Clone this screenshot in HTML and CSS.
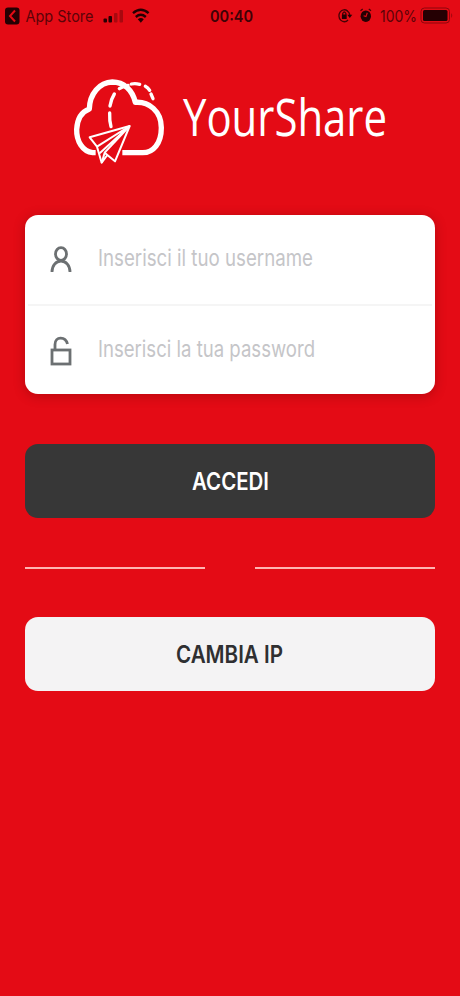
FILE: index.html
```html
<!DOCTYPE html>
<html lang="it">
<head>
<meta charset="utf-8">
<meta name="viewport" content="width=device-width">
<title>YourShare</title>
<link rel="stylesheet" href="styles.css">
</head>
<body>
<header class="status">
  <svg class="status-bar" viewBox="0 0 460 32" width="460" height="32">
    <rect x="5" y="7.500" width="14.500" height="17" rx="3"/>
    <path class="chevron" d="M15 10.500 10 16l5 5.500"/>
    <text class="thin" x="25.500" y="22" textLength="68" lengthAdjust="spacingAndGlyphs">App Store</text>
    <rect x="103.500" y="18.500" width="3.500" height="4" rx="1"/>
    <rect x="108.500" y="16" width="3.500" height="6.500" rx="1"/>
    <rect class="faint" x="114" y="13" width="3.500" height="9.500" rx="1"/>
    <rect class="faint" x="119.500" y="10" width="3.500" height="12.500" rx="1"/>
    <g class="wifi">
      <path d="M133 13.200q7.800-6.800 15.600 0"/>
      <path d="M135.800 17q5-4.300 10 0"/>
    </g>
    <path d="M137.800 19.300q3-2.600 6 0l-3 3.500z"/>
    <text class="bold" x="210" y="22" textLength="43" lengthAdjust="spacingAndGlyphs">00:40</text>
    <g class="lock-ring">
      <path d="M347.500 11a5.300 6 0 1 0 .5 9"/>
      <path d="M346.800 10.500q3 2 3 5"/>
      <path d="M342.700 15v-1.500q1.600-3 3.200 0V15"/>
    </g>
    <path d="M347.300 14.800h5l-2.500 3.200z"/>
    <rect x="341.900" y="14.500" width="4.800" height="4.500" rx=".6"/>
    <ellipse cx="365.800" cy="16.200" rx="5.200" ry="5.800"/>
    <path class="alarm-ears" d="M360.500 10.800l2.200-1.700M371 10.800l-2.200-1.700"/>
    <path class="alarm-hand" d="M367.300 12.800l-1.300 3.700-2.400-.8"/>
    <text class="thin" x="380" y="22" textLength="37" lengthAdjust="spacingAndGlyphs">100%</text>
    <rect class="battery" x="421" y="8" width="28.500" height="15" rx="3.500"/>
    <rect x="423" y="10" width="24.500" height="11" rx="1.500"/>
    <path class="faint" d="M451 13q2.500 2.500 0 5z"/>
  </svg>
</header>
<main class="login">
  <h1 class="brand">
    <svg class="logo" viewBox="0 0 360 330" width="120" height="110">
      <path class="cloud" d="M107 260H98C68 257 49 225 50 190C52 157 66 137 88 129C89 84 118 49 157 48C192 48 217 72 226 109C266 106 304 135 304 185C304 232 280 260 248 260H187"/>
      <path class="trail" d="M153 182Q148 164 149 141M150 120Q153 100 163 84M178 68Q188 61 204 58M214 54Q226 51 239 55M256 61Q264 65 269 73M273 84L279 98"/>
      <g class="plane">
        <path d="M209 180L89 214L111 242L125 290L142 267L165 286Z"/>
        <path d="M209 180L111 242M209 180L119 262M209 180L134 260L125 290M134 260L142 267"/>
      </g>
    </svg>
    <svg class="wordmark" viewBox="0 0 220 84" width="220" height="84">
      <text x="3" y="60" textLength="204" lengthAdjust="spacingAndGlyphs">YourShare</text>
    </svg>
  </h1>
  <section class="card">
    <div class="field">
      <svg class="icon" viewBox="0 0 24 32" width="24" height="32">
        <ellipse cx="12" cy="10" rx="5.500" ry="6.300"/>
        <path d="M3 28c0-6.500 4-11 9-11s9 4.500 9 11"/>
      </svg>
      <svg class="hint" viewBox="0 0 280 48" width="280" height="48">
        <text x="1" y="32" textLength="215" lengthAdjust="spacingAndGlyphs">Inserisci il tuo username</text>
      </svg>
    </div>
    <hr class="rule">
    <div class="field">
      <svg class="icon" viewBox="0 0 24 32" width="24" height="32">
        <rect x="3" y="16" width="18" height="14"/>
        <path d="M6 16V10.500C6 2 16.500 2 18.500 10"/>
      </svg>
      <svg class="hint" viewBox="0 0 280 48" width="280" height="48">
        <text x="1" y="32" textLength="217" lengthAdjust="spacingAndGlyphs">Inserisci la tua password</text>
      </svg>
    </div>
  </section>
  <button class="button dark">
    <svg viewBox="0 0 200 48" width="200" height="48">
      <text x="62" y="32.500" textLength="77" lengthAdjust="spacingAndGlyphs">ACCEDI</text>
    </svg>
  </button>
  <div class="divider"><span></span><span></span></div>
  <button class="button light">
    <svg viewBox="0 0 200 48" width="200" height="48">
      <text x="46" y="32.500" textLength="107" lengthAdjust="spacingAndGlyphs">CAMBIA IP</text>
    </svg>
  </button>
</main>
</body>
</html>
```
FILE: styles.css
```css
* { box-sizing: border-box; }
body {
  margin: 0;
  min-height: 996px;
  background: #e40b15;
  font-family: Inter, "Liberation Sans", sans-serif;
}
svg { display: block; overflow: visible; }
.status { height: 32px; }
.status-bar { fill: #250003; font-size: 16px; }
.thin { fill: #5c0308; }
.bold { font-weight: 600; fill: #400206; }
.faint { fill: #a9080f; }
.chevron { fill: none; stroke: #e40b15; stroke-width: 2; }
.wifi { fill: none; stroke: #250003; stroke-width: 2.4; }
.lock-ring, .alarm-ears { fill: none; stroke: #450205; stroke-width: 1.3; }
.alarm-hand { fill: none; stroke: #e40b15; stroke-width: 1.1; }
.battery { fill: none; stroke: #8d070d; stroke-width: 1; }

.login { padding: 34px 25px 0; }
.brand {
  display: flex;
  align-items: flex-start;
  height: 110px;
  margin: 0 0 39px 35px;
  font-weight: 400;
}
.logo { fill: none; stroke: #fff; stroke-linejoin: round; }
.cloud { stroke-width: 16; }
.trail { stroke-width: 10; stroke-linecap: round; }
.plane { stroke-width: 6; }
.plane path:first-child { fill: #e40b15; }
.wordmark {
  margin-top: 10px;
  font-family: "Open Sans", "Noto Sans", sans-serif;
  font-size: 51.5px;
  fill: #fff;
}
.card {
  height: 179px;
  border-radius: 13px;
  background: #fff;
  box-shadow: 0 2px 12px rgba(90, 0, 0, .32);
}
.field {
  display: flex;
  align-items: center;
  gap: 24px;
  height: 89px;
  padding: 0 24px;
}
.rule { height: 2px; margin: 0 3px; border: 0; background: #f5f5f5; }
.rule + .field { height: 88px; }
.icon { flex: none; fill: none; stroke: #6c7072; stroke-width: 2.8; }
.hint { flex: none; margin-top: -3px; font-size: 22.5px; fill: #c5c5c8; }
.button {
  display: flex;
  align-items: center;
  justify-content: center;
  width: 100%;
  height: 74px;
  margin: 0;
  padding: 0;
  border: 0;
  border-radius: 13px;
  font: 600 24px Inter, "Liberation Sans", sans-serif;
}
.dark { margin-top: 50px; background: #373737; fill: #fff; }
.light { background: #f4f3f4; fill: #2f2f31; }
.divider {
  display: flex;
  justify-content: space-between;
  margin: 49px 0 48px;
}
.divider span { width: 180px; height: 2px; background: #ffb5b2; }
```
